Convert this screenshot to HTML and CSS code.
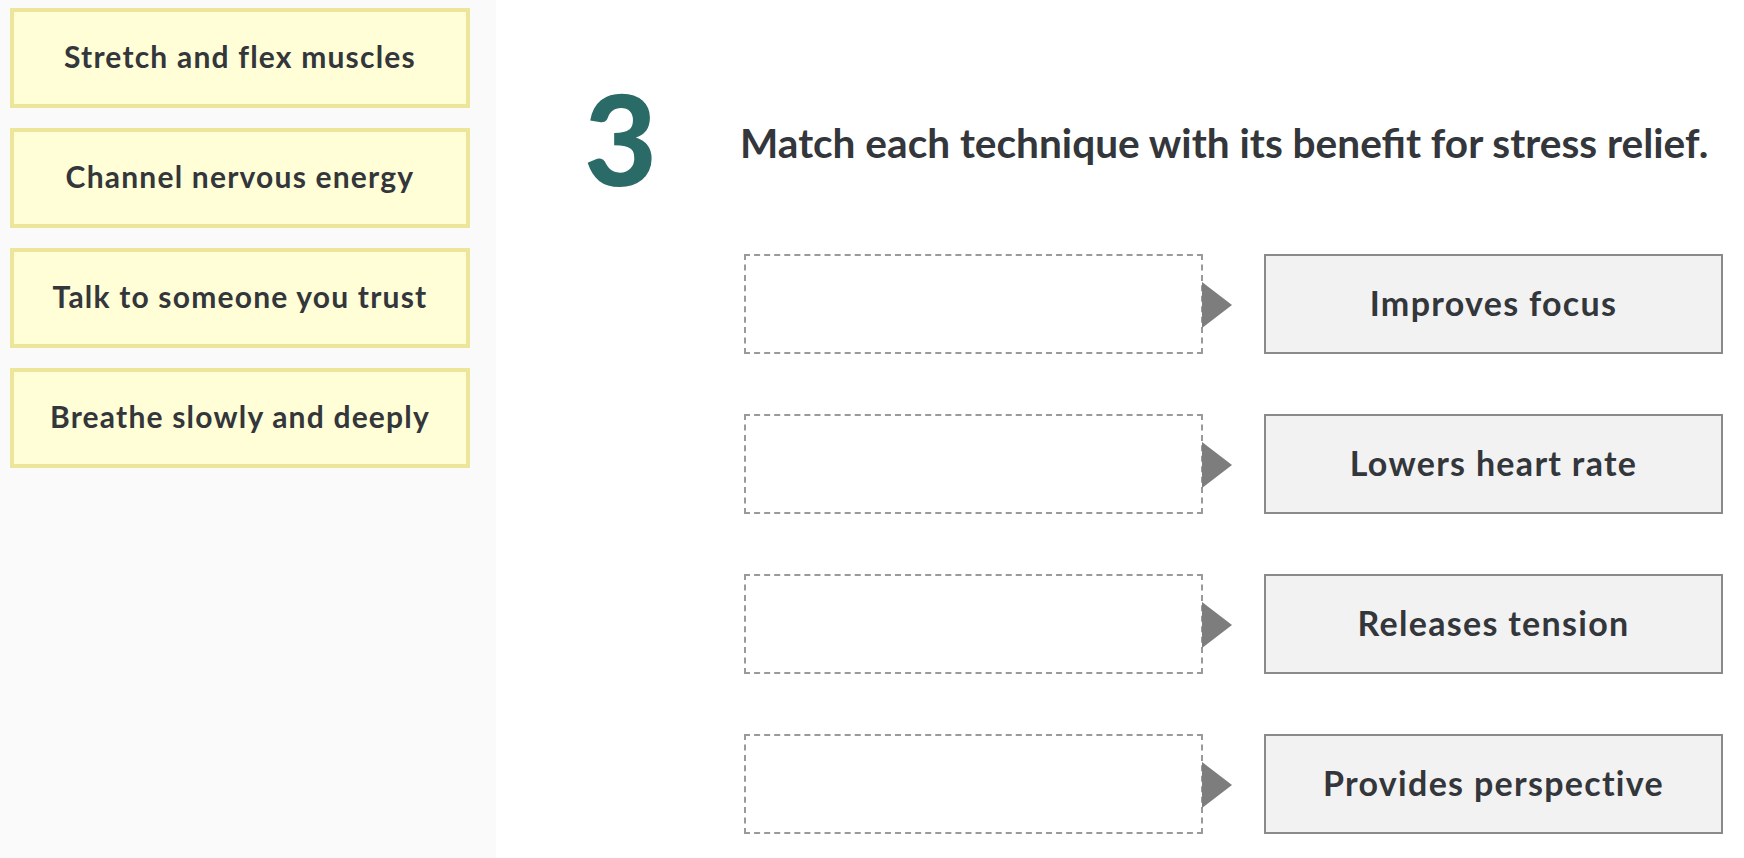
FILE: index.html
```html
<!DOCTYPE html>
<html>
<head>
<meta charset="utf-8">
<link rel="stylesheet" href="styles.css">
</head>
<body>
<div class="page">
  <aside class="bank">
    <div class="chip">Stretch and flex muscles</div>
    <div class="chip">Channel nervous energy</div>
    <div class="chip">Talk to someone you trust</div>
    <div class="chip">Breathe slowly and deeply</div>
  </aside>
  <main class="question">
    <header class="q-head">
      <div class="q-num">3</div>
      <h1 class="q-title">Match each technique with its benefit for stress relief.</h1>
    </header>
    <div class="pairs">
      <div class="pair">
        <div class="drop"></div>
        <div class="arrow"></div>
        <div class="target">Improves focus</div>
      </div>
      <div class="pair">
        <div class="drop"></div>
        <div class="arrow"></div>
        <div class="target">Lowers heart rate</div>
      </div>
      <div class="pair">
        <div class="drop"></div>
        <div class="arrow"></div>
        <div class="target">Releases tension</div>
      </div>
      <div class="pair">
        <div class="drop"></div>
        <div class="arrow"></div>
        <div class="target">Provides perspective</div>
      </div>
    </div>
  </main>
</div>
</body>
</html>
```
FILE: styles.css
```css
html, body {
  margin: 0;
  padding: 0;
  background: #ffffff;
}
body {
  font-family: "Lato", "Liberation Sans", sans-serif;
  color: #33363a;
  width: 1744px;
  height: 858px;
  overflow: hidden;
}
.page {
  display: flex;
  height: 858px;
}
.bank {
  width: 496px;
  flex: 0 0 496px;
  box-sizing: border-box;
  background: #fafafa;
  padding: 8px 26px 0 10px;
  display: flex;
  flex-direction: column;
  gap: 20px;
}
.chip {
  height: 100px;
  box-sizing: border-box;
  border: 4px solid #ede69a;
  background: #fffed6;
  display: flex;
  align-items: center;
  justify-content: center;
  font-weight: 700;
  font-size: 30px;
  letter-spacing: 1.2px;
  padding-bottom: 4px;
}
.question {
  flex: 1;
  display: flex;
  flex-direction: column;
}
.q-head {
  display: flex;
  align-items: center;
  height: 254px;
  box-sizing: border-box;
  padding: 30px 0 0 88px;
}
.q-num {
  font-weight: 900;
  font-size: 126px;
  line-height: 1;
  color: #2a6a67;
  width: 156px;
  margin-bottom: 8px;
}
.q-title {
  margin: 2px 0 0 0;
  font-weight: 700;
  font-size: 40.6px;
  line-height: 1;
}
.pairs {
  display: flex;
  flex-direction: column;
  gap: 60px;
  padding-left: 248px;
}
.pair {
  display: flex;
  align-items: center;
  height: 100px;
}
.drop {
  width: 459px;
  height: 100px;
  box-sizing: border-box;
  border: 2px dashed #9a9a9a;
  background: #fff;
}
.arrow {
  width: 0;
  height: 0;
  border-top: 23px solid transparent;
  border-bottom: 23px solid transparent;
  border-left: 30px solid #7d7d7d;
  margin-left: -1px;
  margin-top: 2px;
}
.target {
  margin-left: 32px;
  width: 459px;
  height: 100px;
  box-sizing: border-box;
  border: 2px solid #8a8a8a;
  background: #f2f2f2;
  display: flex;
  align-items: center;
  justify-content: center;
  font-weight: 700;
  font-size: 34px;
  letter-spacing: 1.3px;
  padding-bottom: 4px;
}
```
